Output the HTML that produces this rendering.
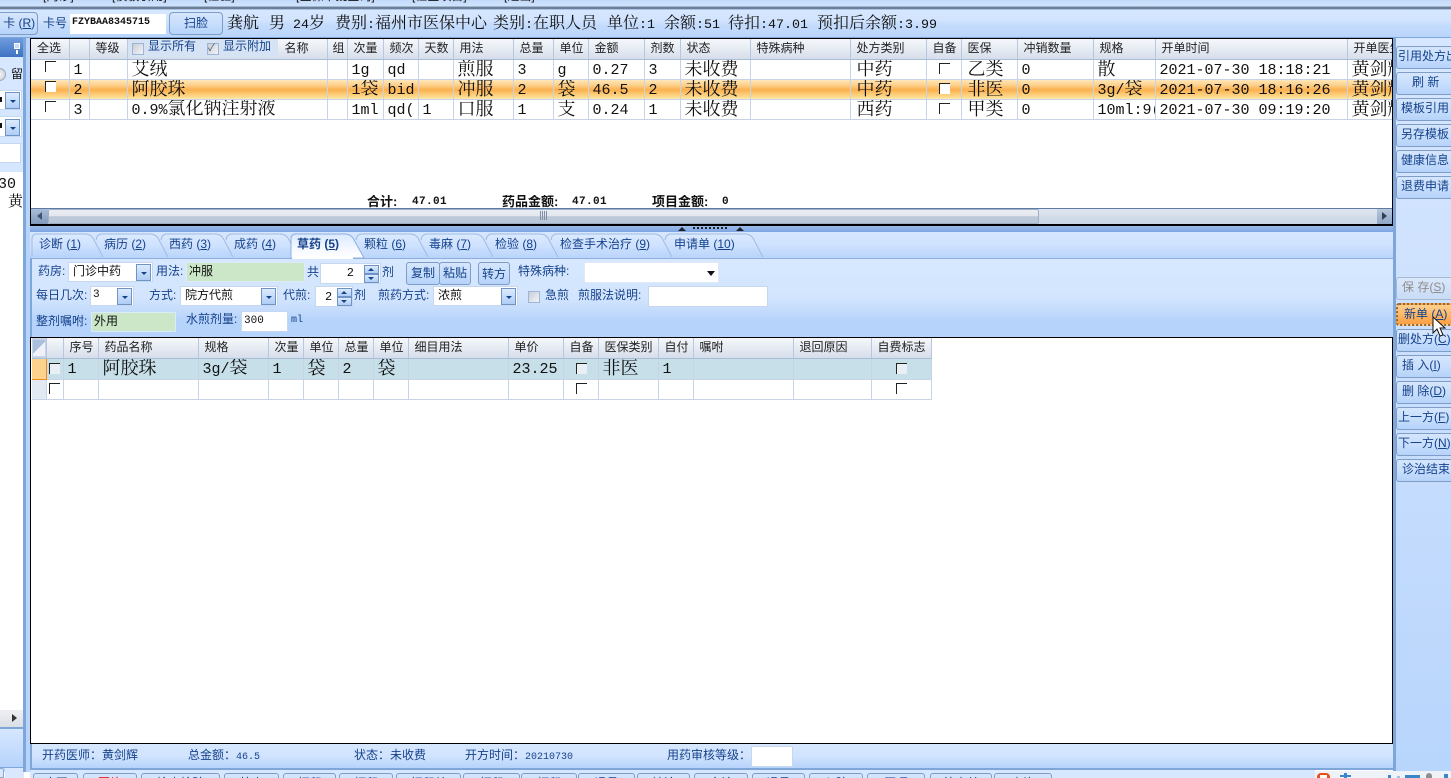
<!DOCTYPE html>
<html lang="zh"><head><meta charset="utf-8"><title>门诊医生工作站</title>
<style>
html,body{margin:0;padding:0;width:1451px;height:778px;overflow:hidden;background:#fff}
body{position:relative;font-family:"Liberation Sans","WenQuanYi Zen Hei","Noto Sans CJK SC",sans-serif;font-size:12px;color:#15428b}
.a{position:absolute;white-space:nowrap;box-sizing:border-box}
.l{position:absolute;white-space:nowrap;line-height:14px;font-size:12px;color:#15428b}
.g{background:linear-gradient(#d6e7ff 0,#d3e5fe 45%,#c4dcfc 65%,#b4d2fa 100%)}
.btn{position:absolute;box-sizing:border-box;border:1px solid #7f9dc6;border-radius:3px;background:linear-gradient(#d5e6fd,#c8defc 50%,#b6d3fa);color:#15428b;text-align:center;white-space:nowrap;overflow:hidden;font-size:12px}
.inp{position:absolute;box-sizing:border-box;background:#fff;border:1px solid #c5d8f0;color:#111;white-space:nowrap;font-size:12px;overflow:hidden;padding-left:3px}
.grn{background:#cbe7c8;border-color:#dcebf8}
.cb{position:absolute;box-sizing:border-box;width:15px;height:17px;border:1px solid #6f93c4;background:linear-gradient(#dcebfd,#aecdf5)}
.cb:after{content:"";position:absolute;left:4px;top:7px;border:3px solid transparent;border-top:3px solid #15428b;border-bottom:0}
.sp{position:absolute;box-sizing:border-box;width:15px;height:9px;border:1px solid #6f93c4;background:linear-gradient(#dcebfd,#aecdf5)}
.up:after,.dn:after{content:"";position:absolute;left:3px;top:2px;border:3px solid transparent;border-top:0;border-bottom:3px solid #15428b}
.dn:after{border-bottom:0;border-top:3px solid #15428b}
table{border-collapse:collapse;table-layout:fixed;position:absolute}
td{box-sizing:border-box;padding:0 0 0 4px;border-right:1px solid #c6d4e6;border-bottom:1px solid #c6d4e6;overflow:hidden;white-space:nowrap;font-family:"Liberation Serif","Noto Serif CJK SC",serif;font-size:18px;line-height:13px;color:#111;height:20px}
td i,.m{font-family:"Liberation Mono",monospace;font-style:normal;font-size:15px}
tr.h td{background:linear-gradient(#f5f7fb,#e6ebf3 50%,#d6deeb);font-family:"Liberation Sans","WenQuanYi Zen Hei","Noto Sans CJK SC",sans-serif;font-size:12px;padding-left:6px;color:#222;border-right:1px solid #b6c7de;border-bottom:1px solid #a9bdd8}
tr.o td{background:linear-gradient(#fee9bf 0,#fdd08a 30%,#fbb04e 55%,#fdcf7c 80%,#fee39a 100%)}
tr.t td{background:#c6dfe9}
.ck{position:absolute;box-sizing:border-box;width:11px;height:11px;border-top:1px solid #222;border-left:1px solid #222}
.ckw{background:#fff}
.ckl{background:#e8f0f6}
.box{position:absolute;box-sizing:border-box;width:12px;height:12px;border:1px solid #9db6d8;background:linear-gradient(135deg,#c9ced6,#f2f4f7);outline:0}
.tab{position:absolute;top:237px;font-size:12px;color:#15428b;line-height:14px;white-space:nowrap}
.st{position:absolute;top:748px;line-height:14px;color:#15428b;font-size:12px;white-space:nowrap}
.st span{font-family:"Liberation Mono",monospace;font-size:10px}
.rb{left:1396px;width:70px;height:23px;line-height:19px;text-align:left;padding-left:1px}
.bb{top:773px;height:12px;background:#d3e5fe;border-radius:3px 3px 0 0;color:#15428b;line-height:12px;padding-top:3px}
.top{position:absolute;top:-11px;font-size:12px;color:#111;line-height:14px;white-space:nowrap}
.info{position:absolute;top:15px;font-family:"Liberation Serif","Noto Serif CJK SC",serif;font-size:16px;line-height:18px;color:#111;white-space:nowrap}
.info i{font-family:"Liberation Mono",monospace;font-style:normal;font-size:13.33px}
.tot{position:absolute;top:195px;font-weight:bold;color:#111;line-height:14px;height:13px;overflow:hidden;font-size:13px}
.totn{font-family:"Liberation Mono",monospace;font-size:11px;letter-spacing:.4px}
</style></head><body>

<!-- top strip -->
<div class="a" style="left:0;top:0;width:1451px;height:7px;background:linear-gradient(#c2daf9,#d2e4fc)"></div>
<div class="top" style="left:43px">[门诊]</div><div class="top" style="left:112px">[模板引用]</div><div class="top" style="left:204px">[检验]</div><div class="top" style="left:296px">[医保审批查询]</div><div class="top" style="left:412px">[检查项目]</div><div class="top" style="left:504px">[退出]</div>
<div class="a" style="left:0;top:6px;width:1451px;height:1px;background:#9fb6d3"></div>
<div class="a" style="left:0;top:7px;width:1451px;height:2px;background:#6d7f97"></div>
<div class="a" style="left:0;top:9px;width:1451px;height:1px;background:#a9c3e6"></div>

<!-- toolbar -->
<div class="a" style="left:0;top:10px;width:1451px;height:28px;background:linear-gradient(#d6e7ff 0,#d2e4fe 35%,#c3dbfc 60%,#bad5fb 100%);border-bottom:1px solid #7ea6d8"></div>
<div class="btn" style="left:-3px;top:12px;width:41px;height:23px;line-height:21px;border-radius:4px">&nbsp;卡 (<u>R</u>)</div>
<div class="l" style="left:43px;top:16px">卡号</div>
<div class="inp" style="left:70px;top:14px;width:96px;height:20px;line-height:17px;border:0;padding-left:2px;font-family:'Liberation Mono',monospace;font-size:10px;font-weight:bold">FZYBAA8345715</div>
<div class="btn" style="left:169px;top:12px;width:54px;height:23px;line-height:21px;border-radius:4px">扫脸</div>
<div class="info" style="left:227px">龚航</div><div class="info" style="left:269px">男</div><div class="info" style="left:293px"><i>24</i>岁</div>
<div class="info" style="left:335px">费别<i>:</i>福州市医保中心</div>
<div class="info" style="left:493px">类别<i>:</i>在职人员</div>
<div class="info" style="left:607px">单位<i>:1</i></div>
<div class="info" style="left:664px">余额<i>:51</i></div>
<div class="info" style="left:728px">待扣<i>:47.01</i></div>
<div class="info" style="left:817px">预扣后余额<i>:3.99</i></div>

<!-- right panel -->
<div class="a" style="left:1393px;top:38px;width:58px;height:734px;background:linear-gradient(#d6e7ff 0,#cfe2fe 30%,#b8d5fc 100%);border-left:3px solid #7ea6d8"></div>
<div class="btn rb" style="top:46px">引用处方出</div>
<div class="btn rb" style="top:72px;padding-left:15px">刷 新</div>
<div class="btn rb" style="top:98px;padding-left:4px">模板引用</div>
<div class="btn rb" style="top:124px;padding-left:4px">另存模板</div>
<div class="btn rb" style="top:150px;padding-left:4px">健康信息</div>
<div class="btn rb" style="top:176px;padding-left:4px">退费申请</div>
<div class="btn rb" style="top:277px;padding-left:5px;color:#8d8d8d;border-color:#a9b9cf;background:linear-gradient(#d9e8fc,#c9dcf6)">保 存(<u>S</u>)</div>
<div class="btn rb" style="top:303px;padding-left:6px;background:linear-gradient(#fdd08e,#fb9f42);border:2px dotted #8d6a3a;line-height:18px">新单 (<u>A</u>)</div>
<div class="btn rb" style="top:329px;padding-left:1px">删处方(<u>C</u>)</div>
<div class="btn rb" style="top:355px;padding-left:5px">插 入(<u>I</u>)</div>
<div class="btn rb" style="top:381px;padding-left:5px">删 除(<u>D</u>)</div>
<div class="btn rb" style="top:407px;padding-left:1px">上一方(<u>F</u>)</div>
<div class="btn rb" style="top:433px;padding-left:1px">下一方(<u>N</u>)</div>
<div class="btn rb" style="top:459px;padding-left:5px">诊治结束</div>

<!-- left panel -->
<div class="a g" style="left:0;top:38px;width:31px;height:734px"></div>
<div class="a" style="left:0;top:38px;width:25px;height:19px;background:linear-gradient(#6e9cdc,#3f72c3)"></div>
<div class="a" style="left:14px;top:43px;width:6px;height:6px;border:1px solid #fff;background:#c9dcf7"></div>
<div class="a" style="left:16px;top:50px;width:2px;height:4px;background:#fff"></div>
<div class="a" style="left:-7px;top:68px;width:13px;height:13px;border-radius:50%;border:1px solid #9fa9b6;background:radial-gradient(#f6f7f9,#c3c9d2)"></div>
<div class="l" style="left:11px;top:67px;color:#111">留</div>
<div class="inp" style="left:0;top:90px;width:22px;height:20px;font-size:9px;padding:3px 0 0 0;border-left:0">&nbsp;</div>
<div class="a" style="left:0;top:97px;width:2px;height:5px;background:#111"></div>
<div class="cb" style="left:5px;top:92px"></div>
<div class="inp" style="left:0;top:116px;width:22px;height:21px;border-left:0"></div>
<div class="a" style="left:0;top:123px;width:2px;height:5px;background:#111"></div>
<div class="cb" style="left:5px;top:119px"></div>
<div class="inp" style="left:0;top:143px;width:21px;height:20px;border-left:0"></div>
<div class="a" style="left:0;top:172px;width:24px;height:538px;background:#fff"></div>
<div class="a m" style="left:-2px;top:177px;color:#111;line-height:16px;font-size:15px">30</div>
<div class="a" style="left:8px;top:193px;color:#111;font-family:'Liberation Serif','Noto Serif CJK SC',serif;font-size:15px;line-height:18px">黄</div>
<div class="a" style="left:0;top:710px;width:24px;height:17px;background:linear-gradient(#eef0f3,#dadfe6)"></div>
<div class="a" style="left:12px;top:714px;border:4px solid transparent;border-left:5px solid #333;border-right:0"></div>
<div class="a" style="left:0;top:727px;width:24px;height:2px;background:#7ea6d8"></div>
<div class="a" style="left:0;top:729px;width:24px;height:38px;background:linear-gradient(#d6e7ff,#b6d3fb)"></div>
<div class="a" style="left:0;top:767px;width:24px;height:1px;background:#7ea6d8"></div>
<div class="a" style="left:0;top:768px;width:4px;height:10px;background:#dbe9fe;border:1px solid #8ea9cd;border-left:0;border-radius:0 3px 0 0"></div>
<div class="a" style="left:5px;top:768px;width:19px;height:10px;background:#d9e8fe"></div>
<div class="a" style="left:23px;top:38px;width:3px;height:734px;background:#7ea6d8"></div>
<div class="a" style="left:26px;top:38px;width:4px;height:734px;background:#b8d4fb"></div>

<!-- upper grid -->
<div class="a" style="left:30px;top:38px;width:1363px;height:188px;background:#fff;border:1px solid #000;border-bottom-width:2px;overflow:hidden"></div>
<div class="a" style="left:31px;top:39px;width:1361px;height:169px;overflow:hidden">
<table style="left:0;top:0;width:1361px">
<colgroup><col style="width:38px"><col style="width:20px"><col style="width:38px"><col style="width:200px"><col style="width:20px"><col style="width:36px"><col style="width:35px"><col style="width:35px"><col style="width:60px"><col style="width:40px"><col style="width:35px"><col style="width:56px"><col style="width:36px"><col style="width:70px"><col style="width:100px"><col style="width:76px"><col style="width:35px"><col style="width:56px"><col style="width:76px"><col style="width:62px"><col style="width:192px"><col style="width:45px"></colgroup>
<tr class="h"><td style="height:20px">全选</td><td></td><td>等级</td><td style="padding-left:157px">名称</td><td style="padding-left:5px">组</td><td>次量</td><td>频次</td><td>天数</td><td>用法</td><td>总量</td><td>单位</td><td>金额</td><td>剂数</td><td>状态</td><td>特殊病种</td><td>处方类别</td><td>自备</td><td>医保</td><td>冲销数量</td><td>规格</td><td>开单时间</td><td>开单医生</td></tr>
<tr><td></td><td><i>1</i></td><td></td><td>艾绒</td><td></td><td><i>1g</i></td><td><i>qd</i></td><td></td><td>煎服</td><td><i>3</i></td><td><i>g</i></td><td><i>0.27</i></td><td><i>3</i></td><td>未收费</td><td></td><td style="padding-left:6px">中药</td><td></td><td style="padding-left:6px">乙类</td><td><i>0</i></td><td>散</td><td><i>2021-07-30 18:18:21</i></td><td>黄剑辉</td></tr>
<tr class="o"><td></td><td><i>2</i></td><td></td><td>阿胶珠</td><td></td><td><i>1</i>袋</td><td><i>bid</i></td><td></td><td>冲服</td><td><i>2</i></td><td>袋</td><td><i>46.5</i></td><td><i>2</i></td><td>未收费</td><td></td><td style="padding-left:6px">中药</td><td></td><td style="padding-left:6px">非医</td><td><i>0</i></td><td><i>3g/</i>袋</td><td><i>2021-07-30 18:16:26</i></td><td>黄剑辉</td></tr>
<tr><td></td><td><i>3</i></td><td></td><td><i>0.9%</i>氯化钠注射液</td><td></td><td><i>1ml</i></td><td><i>qd(</i></td><td><i>1</i></td><td>口服</td><td><i>1</i></td><td>支</td><td><i>0.24</i></td><td><i>1</i></td><td>未收费</td><td></td><td style="padding-left:6px">西药</td><td></td><td style="padding-left:6px">甲类</td><td><i>0</i></td><td><i>10ml:9(</i></td><td><i>2021-07-30 09:19:20</i></td><td>黄剑辉</td></tr>
</table>
</div>
<!-- header check overlays -->
<div class="a" style="left:128px;top:39px;width:150px;height:18px;background:#d5e3f5"></div>
<div class="box" style="left:132px;top:43px"></div><div class="l" style="left:148px;top:39px">显示所有</div>
<div class="box" style="left:207px;top:43px;font-size:10px;line-height:10px;color:#456">✓</div><div class="l" style="left:223px;top:39px">显示附加</div>
<div class="ck" style="left:45px;top:61px"></div><div class="ck ckw" style="left:45px;top:81px"></div><div class="ck" style="left:45px;top:101px"></div>
<div class="ck" style="left:939px;top:63px"></div><div class="ck ckw" style="left:939px;top:83px"></div><div class="ck" style="left:939px;top:103px"></div>
<div class="tot" style="left:367px">合计:</div><div class="tot totn" style="left:412px">47.01</div>
<div class="tot" style="left:502px">药品金额:</div><div class="tot totn" style="left:572px">47.01</div>
<div class="tot" style="left:652px">项目金额:</div><div class="tot totn" style="left:722px">0</div>
<!-- scrollbar -->
<div class="a" style="left:31px;top:208px;width:1361px;height:1px;background:#5f7aa3"></div>
<div class="a" style="left:31px;top:209px;width:1361px;height:15px;background:linear-gradient(#dfe6ef,#c9d5e5)"></div>
<div class="a" style="left:31px;top:209px;width:17px;height:15px;background:linear-gradient(#a9bdd8,#8199bd)"></div>
<div class="a" style="left:37px;top:212px;border:4px solid transparent;border-right:5px solid #3f556f;border-left:0"></div>
<div class="a" style="left:48px;top:209px;width:991px;height:15px;background:linear-gradient(#e9edf2 0,#e4e8ee 45%,#bcc9da 50%,#b9c7d9 100%);border:1px solid #9fb1c9;border-radius:2px"></div>
<div class="a" style="left:540px;top:211px;width:7px;height:9px;background:repeating-linear-gradient(90deg,#7f8fa5 0,#7f8fa5 1px,transparent 1px,transparent 2px)"></div>
<div class="a" style="left:1377px;top:209px;width:15px;height:15px;background:linear-gradient(#b7c7dc,#8fa6c6)"></div>
<div class="a" style="left:1382px;top:212px;border:4px solid transparent;border-left:5px solid #2f3f55;border-right:0"></div>

<!-- splitter -->
<div class="a" style="left:30px;top:226px;width:1363px;height:6px;background:linear-gradient(#9dbdea,#7ca3e2)"></div>
<div class="a" style="left:678px;top:227px;border:4px solid transparent;border-top:0;border-bottom:4px solid #222"></div>
<div class="a" style="left:736px;top:227px;border:4px solid transparent;border-top:0;border-bottom:4px solid #222"></div>
<div class="a" style="left:693px;top:227px;width:35px;height:2px;background:repeating-linear-gradient(90deg,#222 0,#222 2px,transparent 2px,transparent 4px)"></div>

<!-- tab strip -->
<div class="a" style="left:30px;top:232px;width:1363px;height:26px;background:linear-gradient(#d6e7ff,#cfe2fe 50%,#b9d5fb)"></div>
<svg class="a" style="left:30px;top:232px" width="740" height="27" viewBox="30 232 740 27">
<defs><linearGradient id="tg" x1="0" y1="0" x2="0" y2="1"><stop offset="0" stop-color="#dbeaff"/><stop offset=".55" stop-color="#cde0fe"/><stop offset="1" stop-color="#b6d3fb"/></linearGradient>
<linearGradient id="ta" x1="0" y1="0" x2="0" y2="1"><stop offset="0" stop-color="#d9e9ff"/><stop offset=".6" stop-color="#f4f8ff"/><stop offset="1" stop-color="#fff"/></linearGradient></defs>
<g fill="url(#tg)" stroke="#a0bce2">
<path d="M32 257V239Q32 234 37 234H85Q90 234 93 238L103 257"/>
<path d="M96 240Q97 234 102 234H150Q155 234 158 238L168 257"/>
<path d="M161 240Q162 234 167 234H215Q220 234 223 238L233 257"/>
<path d="M226 240Q227 234 232 234H280Q285 234 288 238L298 257"/>
<path d="M356 240Q357 234 362 234H410Q415 234 418 238L428 257"/>
<path d="M421 240Q422 234 427 234H475Q480 234 483 238L493 257"/>
<path d="M486 240Q487 234 492 234H540Q545 234 548 238L558 257"/>
<path d="M551 240Q552 234 557 234H654Q659 234 662 238L672 257"/>
<path d="M665 240Q666 234 671 234H745Q750 234 753 238L763 257"/>
<path d="M291 257V239Q291 234 296 234H345Q350 234 353 238L364 258H291Z" fill="url(#ta)" stroke="#8fb0de"/>
</g></svg>
<div class="tab" style="left:39px">诊断 (<u>1</u>)</div>
<div class="tab" style="left:104px">病历 (<u>2</u>)</div>
<div class="tab" style="left:169px">西药 (<u>3</u>)</div>
<div class="tab" style="left:234px">成药 (<u>4</u>)</div>
<div class="tab" style="left:297px;font-weight:bold">草药 (<u>5</u>)</div>
<div class="tab" style="left:364px">颗粒 (<u>6</u>)</div>
<div class="tab" style="left:429px">毒麻 (<u>7</u>)</div>
<div class="tab" style="left:495px">检验 (<u>8</u>)</div>
<div class="tab" style="left:560px">检查手术治疗 (<u>9</u>)</div>
<div class="tab" style="left:674px">申请单 (<u>10</u>)</div>

<!-- form panel -->
<div class="a" style="left:30px;top:258px;width:1363px;height:79px;background:linear-gradient(#d6e7ff 0,#d3e5fe 50%,#c5dcfc 65%,#b5d3fb 80%,#b5d3fb 100%);border-top:1px solid #8fb0de;border-left:2px solid #7ea6d8"></div>
<div class="a" style="left:364px;top:258px;width:1029px;height:1px;background:#8fb0de"></div>
<div class="a" style="left:292px;top:257px;width:61px;height:2px;background:#fff"></div>

<div class="l" style="left:38px;top:264px">药房:</div>
<div class="inp" style="left:68px;top:262px;width:85px;height:20px;line-height:17px;padding-left:4px">门诊中药</div><div class="cb" style="left:136px;top:264px"></div>
<div class="l" style="left:156px;top:264px">用法:</div>
<div class="inp grn" style="left:186px;top:262px;width:119px;height:20px;line-height:16px;padding-left:2px">冲服</div>
<div class="l" style="left:307px;top:265px">共</div>
<div class="inp" style="left:320px;top:263px;width:61px;height:21px;line-height:19px;text-align:right;padding-right:26px;font-family:'Liberation Mono',monospace">2</div>
<div class="sp up" style="left:364px;top:265px"></div><div class="sp dn" style="left:364px;top:274px"></div>
<div class="l" style="left:382px;top:265px">剂</div>
<div class="btn" style="left:406px;top:262px;width:34px;height:23px;line-height:20px">复制</div>
<div class="btn" style="left:439px;top:262px;width:32px;height:23px;line-height:20px">粘贴</div>
<div class="btn" style="left:478px;top:262px;width:32px;height:23px;line-height:22px">转方</div>
<div class="l" style="left:518px;top:264px">特殊病种:</div>
<div class="inp" style="left:584px;top:262px;width:135px;height:21px;border:1px solid #dfe9f7"></div>
<div class="a" style="left:707px;top:271px;border:4px solid transparent;border-top:5px solid #111;border-bottom:0"></div>

<div class="l" style="left:36px;top:288px">每日几次:</div>
<div class="inp" style="left:90px;top:286px;width:44px;height:20px;line-height:17px;padding-left:2px;font-family:'Liberation Mono',monospace;font-size:11px">3</div><div class="cb" style="left:117px;top:288px"></div>
<div class="l" style="left:149px;top:288px">方式:</div>
<div class="inp" style="left:180px;top:286px;width:98px;height:20px;line-height:17px;padding-left:4px">院方代煎</div><div class="cb" style="left:261px;top:288px"></div>
<div class="l" style="left:283px;top:288px">代煎:</div>
<div class="inp" style="left:315px;top:286px;width:38px;height:21px;line-height:20px;padding-left:9px;font-family:'Liberation Mono',monospace">2</div>
<div class="sp up" style="left:337px;top:288px"></div><div class="sp dn" style="left:337px;top:297px"></div>
<div class="l" style="left:354px;top:288px">剂</div>
<div class="l" style="left:378px;top:288px">煎药方式:</div>
<div class="inp" style="left:433px;top:286px;width:85px;height:20px;line-height:17px;padding-left:4px">浓煎</div><div class="cb" style="left:501px;top:288px"></div>
<div class="box" style="left:528px;top:291px"></div>
<div class="l" style="left:545px;top:288px">急煎</div>
<div class="l" style="left:578px;top:288px">煎服法说明:</div>
<div class="inp" style="left:648px;top:286px;width:120px;height:21px"></div>

<div class="l" style="left:36px;top:314px">整剂嘱咐:</div>
<div class="inp grn" style="left:91px;top:312px;width:85px;height:20px;line-height:16px;padding-left:2px">外用</div>
<div class="l" style="left:186px;top:312px">水煎剂量:</div>
<div class="inp" style="left:241px;top:311px;width:47px;height:21px;line-height:19px;padding-left:2px;font-family:'Liberation Mono',monospace;font-size:11px">300</div>
<div class="l m" style="left:291px;top:314px;font-size:10px;color:#15428b">ml</div>

<!-- lower grid -->
<div class="a" style="left:30px;top:337px;width:1363px;height:407px;background:#fff;border:1px solid #000"></div>
<table style="left:32px;top:338px;width:899px">
<colgroup><col style="width:14px"><col style="width:17px"><col style="width:35px"><col style="width:100px"><col style="width:70px"><col style="width:35px"><col style="width:35px"><col style="width:35px"><col style="width:35px"><col style="width:100px"><col style="width:55px"><col style="width:35px"><col style="width:60px"><col style="width:35px"><col style="width:100px"><col style="width:78px"><col style="width:60px"></colgroup>
<tr class="h"><td style="height:20px;background:#c5d3e6"></td><td></td><td>序号</td><td>药品名称</td><td>规格</td><td>次量</td><td>单位</td><td>总量</td><td>单位</td><td>细目用法</td><td>单价</td><td>自备</td><td>医保类别</td><td>自付</td><td>嘱咐</td><td>退回原因</td><td>自费标志</td></tr>
<tr class="t"><td style="height:21px;background:#fdd28c;border-bottom:1px solid #f08c1c;border-right:1px solid #f08c1c"></td><td></td><td style="padding-left:4px"><i>1</i></td><td>阿胶珠</td><td><i>3g/</i>袋</td><td><i>1</i></td><td>袋</td><td><i>2</i></td><td>袋</td><td></td><td><i>23.25</i></td><td></td><td>非医</td><td><i>1</i></td><td></td><td></td><td></td></tr>
<tr><td style="background:#e3e9f3"></td><td></td><td></td><td></td><td></td><td></td><td></td><td></td><td></td><td></td><td></td><td></td><td></td><td></td><td></td><td></td><td></td></tr>
</table>
<div class="a" style="left:33px;top:340px;width:12px;height:16px;background:linear-gradient(135deg,#a9bfdc 50%,#eef2f8 50%)"></div>
<div class="ck ckl" style="left:49px;top:363px"></div><div class="ck" style="left:49px;top:383px"></div>
<div class="ck ckl" style="left:576px;top:363px"></div><div class="ck" style="left:576px;top:383px"></div>
<div class="ck ckl" style="left:896px;top:363px"></div><div class="ck" style="left:896px;top:383px"></div>

<!-- status bar -->
<div class="a" style="left:30px;top:744px;width:1363px;height:26px;background:linear-gradient(#d6e7ff 0,#d2e4fe 50%,#b6d3fb 100%);border-bottom:2px solid #7ea6d8;border-left:2px solid #7ea6d8"></div>
<div class="st" style="left:42px">开药医师：黄剑辉</div>
<div class="st" style="left:188px">总金额：<span>46.5</span></div>
<div class="st" style="left:354px">状态：未收费</div>
<div class="st" style="left:465px">开方时间：<span>20210730</span></div>
<div class="st" style="left:667px">用药审核等级：</div>
<div class="inp" style="left:751px;top:746px;width:42px;height:21px"></div>

<!-- bottom buttons -->
<div class="a" style="left:30px;top:770px;width:1285px;height:8px;background:#d6e7ff"></div>
<div class="btn bb" style="left:33px;width:45px">病历</div>
<div class="btn bb" style="left:83px;width:54px;color:#d00">图片</div>
<div class="btn bb" style="left:141px;width:79px">检查检验</div>
<div class="btn bb" style="left:224px;width:55px">处方</div>
<div class="btn bb" style="left:283px;width:53px">打印</div>
<div class="btn bb" style="left:339px;width:54px">打印</div>
<div class="btn bb" style="left:396px;width:65px">打印单</div>
<div class="btn bb" style="left:463px;width:57px">打印</div>
<div class="btn bb" style="left:521px;width:56px">打印</div>
<div class="btn bb" style="left:578px;width:57px">退号</div>
<div class="btn bb" style="left:637px;width:53px">转诊</div>
<div class="btn bb" style="left:694px;width:54px">会诊</div>
<div class="btn bb" style="left:752px;width:53px">退号</div>
<div class="btn bb" style="left:809px;width:54px">入院</div>
<div class="btn bb" style="left:867px;width:58px">医嘱</div>
<div class="btn bb" style="left:930px;width:62px">处方单</div>
<div class="btn bb" style="left:994px;width:58px">查询</div>

<!-- tray -->
<div class="a" style="left:1315px;top:771px;width:136px;height:7px;background:#eef3fa"></div>
<div class="a" style="left:1317px;top:773px;width:13px;height:5px;background:#e8501a;border-radius:4px 4px 0 0"></div>
<div class="a" style="left:1320px;top:775px;width:7px;height:3px;background:#fff"></div>
<div class="a" style="left:1344px;top:773px;width:3px;height:5px;background:#3b86c8"></div>
<div class="a" style="left:1340px;top:775px;width:11px;height:2px;background:#3b86c8"></div>
<div class="a" style="left:1388px;top:775px;width:3px;height:3px;background:#3b86c8"></div>
<div class="a" style="left:1397px;top:776px;width:3px;height:2px;background:#9fc1e6"></div>
<div class="a" style="left:1405px;top:775px;width:15px;height:3px;background:#3b86c8"></div>
<div class="a" style="left:1426px;top:773px;width:6px;height:5px;background:#8f8f8f;border-radius:3px 3px 0 0"></div>
<div class="a" style="left:1444px;top:774px;width:4px;height:4px;background:#3b86c8"></div>

<!-- cursor -->
<svg class="a" style="left:1432px;top:316px" width="14" height="21" viewBox="0 0 14 21"><path d="M1 1V17L5 13L8 20L11 19L8 12H13Z" fill="#fff" stroke="#111" stroke-width="1"/></svg>
</body></html>
